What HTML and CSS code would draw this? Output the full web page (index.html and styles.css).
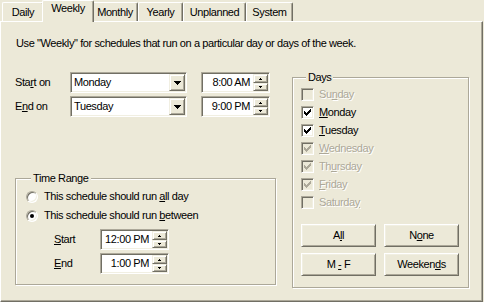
FILE: index.html
```html
<!DOCTYPE html>
<html lang="en">
<head>
  <meta charset="UTF-8" />
  <title>Schedule - Weekly</title>
  <link rel="stylesheet" href="styles.css">
</head>
<body>
  <div class="tabs">
    <div class="tab tab-daily">Daily</div>
    <div class="tab tab-weekly active">Weekly</div>
    <div class="tab tab-monthly">Monthly</div>
    <div class="tab tab-yearly">Yearly</div>
    <div class="tab tab-unplanned">Unplanned</div>
    <div class="tab tab-system">System</div>
  </div>

  <div class="panel">
    <p class="intro">Use "Weekly" for schedules that run on a particular day or days of the week.</p>

    <div class="main">
      <div class="left">
        <div class="field-row">
          <span class="field-label">Sta<u>r</u>t on</span>
          <div class="combo">
            <span class="combo-text">Monday</span>
            <span class="drop-btn"><svg width="7" height="4"><path d="M0 0h7v1H0zM1 1h5v1H1zM2 2h3v1H2zM3 3h1v1H3z"/></svg></span>
          </div>
          <div class="spin">
            <span class="spin-text">8:00 AM</span>
            <span class="spin-btns">
              <span class="spin-btn up"><svg width="3" height="2"><path d="M1 0h1v1H1zM0 1h3v1H0z"/></svg></span>
              <span class="spin-btn down"><svg width="3" height="2"><path d="M0 0h3v1H0zM1 1h1v1H1z"/></svg></span>
            </span>
          </div>
        </div>
        <div class="field-row">
          <span class="field-label">E<u>n</u>d on</span>
          <div class="combo">
            <span class="combo-text">Tuesday</span>
            <span class="drop-btn"><svg width="7" height="4"><path d="M0 0h7v1H0zM1 1h5v1H1zM2 2h3v1H2zM3 3h1v1H3z"/></svg></span>
          </div>
          <div class="spin">
            <span class="spin-text">9:00 PM</span>
            <span class="spin-btns">
              <span class="spin-btn up"><svg width="3" height="2"><path d="M1 0h1v1H1zM0 1h3v1H0z"/></svg></span>
              <span class="spin-btn down"><svg width="3" height="2"><path d="M0 0h3v1H0zM1 1h1v1H1z"/></svg></span>
            </span>
          </div>
        </div>

        <div class="group time-range">
          <div class="group-title">Time Range</div>
          <div class="radio-row first"><span class="radio"></span><span>This schedule should run <u>a</u>ll day</span></div>
          <div class="radio-row"><span class="radio checked"></span><span>This schedule should run <u>b</u>etween</span></div>
          <div class="time-row first">
            <span class="time-label"><u>S</u>tart</span>
            <div class="spin">
              <span class="spin-text">12:00 PM</span>
              <span class="spin-btns">
                <span class="spin-btn up"><svg width="3" height="2"><path d="M1 0h1v1H1zM0 1h3v1H0z"/></svg></span>
                <span class="spin-btn down"><svg width="3" height="2"><path d="M0 0h3v1H0zM1 1h1v1H1z"/></svg></span>
              </span>
            </div>
          </div>
          <div class="time-row">
            <span class="time-label"><u>E</u>nd</span>
            <div class="spin">
              <span class="spin-text">1:00 PM</span>
              <span class="spin-btns">
                <span class="spin-btn up"><svg width="3" height="2"><path d="M1 0h1v1H1zM0 1h3v1H0z"/></svg></span>
                <span class="spin-btn down"><svg width="3" height="2"><path d="M0 0h3v1H0zM1 1h1v1H1z"/></svg></span>
              </span>
            </div>
          </div>
        </div>
      </div>

      <div class="group days">
        <div class="group-title">Days</div>
        <div class="check-list">
          <div class="check-row disabled"><span class="check"></span><span>Su<u>n</u>day</span></div>
          <div class="check-row"><span class="check"><svg width="7" height="7"><path d="M0 2h1v3H0zM1 3h1v3H1zM2 4h1v3H2zM3 3h1v3H3zM4 2h1v3H4zM5 1h1v3H5zM6 0h1v3H6z"/></svg></span><span><u>M</u>onday</span></div>
          <div class="check-row"><span class="check"><svg width="7" height="7"><path d="M0 2h1v3H0zM1 3h1v3H1zM2 4h1v3H2zM3 3h1v3H3zM4 2h1v3H4zM5 1h1v3H5zM6 0h1v3H6z"/></svg></span><span><u>T</u>uesday</span></div>
          <div class="check-row disabled"><span class="check"><svg width="7" height="7"><path d="M0 2h1v3H0zM1 3h1v3H1zM2 4h1v3H2zM3 3h1v3H3zM4 2h1v3H4zM5 1h1v3H5zM6 0h1v3H6z"/></svg></span><span><u>W</u>ednesday</span></div>
          <div class="check-row disabled"><span class="check"><svg width="7" height="7"><path d="M0 2h1v3H0zM1 3h1v3H1zM2 4h1v3H2zM3 3h1v3H3zM4 2h1v3H4zM5 1h1v3H5zM6 0h1v3H6z"/></svg></span><span>Th<u>u</u>rsday</span></div>
          <div class="check-row disabled"><span class="check"><svg width="7" height="7"><path d="M0 2h1v3H0zM1 3h1v3H1zM2 4h1v3H2zM3 3h1v3H3zM4 2h1v3H4zM5 1h1v3H5zM6 0h1v3H6z"/></svg></span><span><u>F</u>riday</span></div>
          <div class="check-row disabled"><span class="check"></span><span>Saturda<u>y</u></span></div>
        </div>
        <div class="btn-grid">
          <button class="btn">A<u>l</u>l</button>
          <button class="btn">N<u>o</u>ne</button>
          <button class="btn">M <u>-</u> F</button>
          <button class="btn">Weeken<u>d</u>s</button>
        </div>
      </div>
    </div>
  </div>
</body>
</html>
```

FILE: styles.css
```css
body {
  margin: 0;
  width: 484px;
  height: 302px;
  overflow: hidden;
  background: #ece9d8;
  color: #000;
  font-family: "Liberation Sans", Arial, sans-serif;
  font-size: 11px;
  line-height: 13px;
  letter-spacing: -0.4px;
  white-space: nowrap;
}
u {
  text-underline-offset: 1px;
}

/* tab strip */
.tabs {
  display: flex;
  align-items: flex-end;
  height: 21px;
  padding-left: 2px;
}
.tab {
  box-sizing: border-box;
  height: 19px;
  padding-top: 3px;
  text-align: center;
  background: #ece9d8;
  border-top: 1px solid #fff;
  border-left: 1px solid #fff;
  border-right: 1px solid #716f64;
  border-radius: 2px 2px 0 0;
  box-shadow: inset -1px 0 #aca899;
}
.tab.active {
  position: relative;
  z-index: 1;
  height: 22px;
  margin: 0 -2px -1px;
  padding-top: 1px;
}
.tab-daily { width: 42px; }
.tab-weekly { width: 52px; }
.tab-monthly { width: 46px; }
.tab-yearly { width: 45px; }
.tab-unplanned { width: 63px; }
.tab-system { width: 47px; }

.panel {
  box-sizing: border-box;
  width: 483px;
  height: 281px;
  padding: 15px 0 0 14px;
  border: 1px solid;
  border-color: #fff #716f64 #716f64 #fff;
  box-shadow: inset -1px -1px #aca899;
}
.intro {
  margin: 0;
  padding-left: 1px;
}
.main {
  display: flex;
  gap: 16px;
  margin-top: 22px;
}
.left {
  width: 261px;
}

/* combo + spin rows */
.field-row {
  display: flex;
  align-items: center;
  height: 21px;
}
.field-row + .field-row {
  margin-top: 3px;
}
.field-label {
  width: 55px;
}
.combo, .spin {
  box-sizing: border-box;
  display: flex;
  height: 21px;
  padding: 1px;
  background: #fff;
  border: 1px solid;
  border-color: #aca899 #fff #fff #aca899;
  box-shadow: inset 1px 1px #716f64, inset -1px -1px #f1efe2;
}
.combo {
  width: 117px;
  margin-right: 14px;
}
.combo-text {
  flex: 1;
  padding-left: 2px;
  line-height: 17px;
}
.drop-btn, .spin-btn {
  box-sizing: border-box;
  display: flex;
  align-items: center;
  justify-content: center;
  background: #ece9d8;
  border: 1px solid;
  border-color: #f1efe2 #716f64 #716f64 #f1efe2;
  box-shadow: inset 1px 1px #fff, inset -1px -1px #aca899;
}
.drop-btn {
  width: 16px;
}
.spin {
  width: 69px;
}
.spin-text {
  flex: 1;
  padding-right: 3px;
  text-align: right;
  line-height: 17px;
}
.spin-btns {
  display: flex;
  flex-direction: column;
  width: 15px;
}
.spin-btn.up { height: 9px; }
.spin-btn.down { height: 8px; }

/* group boxes */
.group {
  box-sizing: border-box;
  border: 1px solid #aca899;
  box-shadow: inset 1px 1px #fff, 1px 1px #fff;
}
.group-title {
  width: max-content;
  margin: -7px 0 0 5px;
  padding: 0 2px;
  background: #ece9d8;
}
.time-range {
  margin-top: 61px;
  padding: 0 0 10px 10px;
}
.radio-row {
  display: flex;
  align-items: center;
  gap: 6px;
  height: 19px;
}
.radio-row.first {
  margin-top: 2px;
}
.radio {
  box-sizing: border-box;
  display: flex;
  align-items: center;
  justify-content: center;
  width: 12px;
  height: 12px;
  border-radius: 50%;
  background: #fff;
  border: 1px solid;
  border-color: #aca899 #fff #fff #aca899;
  box-shadow: inset 1px 1px #716f64, inset -1px -1px #f1efe2;
}
.radio.checked::after {
  content: "";
  width: 4px;
  height: 4px;
  border-radius: 50%;
  background: #000;
}
.time-row {
  display: flex;
  align-items: center;
  height: 21px;
  margin: 3px 0 0 28px;
}
.time-row.first {
  margin-top: 4px;
}
.time-label {
  width: 46px;
}

.days {
  width: 177px;
  margin-top: 5px;
  padding: 0 0 11px 8px;
}
.check-list {
  margin-top: 1px;
}
.check-row {
  display: flex;
  align-items: center;
  gap: 5px;
  height: 18px;
}
.check {
  box-sizing: border-box;
  display: flex;
  align-items: center;
  justify-content: center;
  width: 13px;
  height: 13px;
  background: #fff;
  border: 1px solid;
  border-color: #aca899 #fff #fff #aca899;
  box-shadow: inset 1px 1px #716f64, inset -1px -1px #f1efe2;
}
.check-row.disabled {
  color: #aca899;
  text-shadow: 1px 1px #fff;
}
.check-row.disabled .check {
  background: #ece9d8;
}
.check-row.disabled svg {
  fill: #aca899;
}

.btn-grid {
  display: grid;
  grid-template-columns: 75px 75px;
  grid-auto-rows: 23px;
  gap: 6px 8px;
  margin-top: 13px;
}
.btn {
  padding: 0;
  font: inherit;
  letter-spacing: inherit;
  color: #000;
  background: #ece9d8;
  border: 1px solid;
  border-color: #fff #716f64 #716f64 #fff;
  box-shadow: inset 1px 1px #f1efe2, inset -1px -1px #aca899;
}
```
